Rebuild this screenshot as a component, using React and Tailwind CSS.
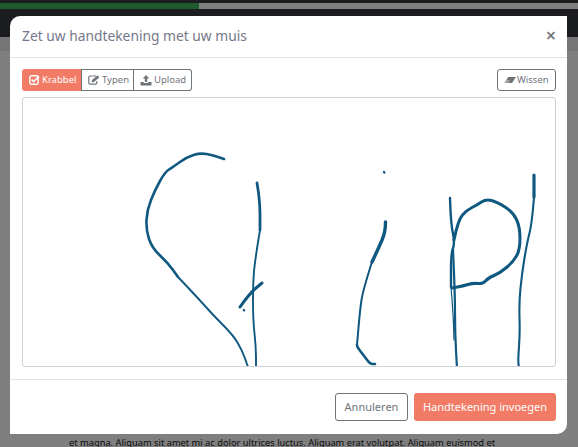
import React from "react";

// points read off the picture, page pixel coords
const strokes = [
  { w: 2.6, pts: [[224, 159], [213, 155], [200, 153], [187, 157], [173, 167], [165, 172], [155, 190], [147, 210], [146, 230], [152, 248], [168, 263], [178, 277]] },
  { w: 1.9, pts: [[178, 277], [197, 297], [213, 315], [233, 335], [242, 350], [248, 367]] },
  { w: 2.8, pts: [[257, 183], [260, 200], [260, 230]] },
  { w: 1.9, pts: [[260, 230], [255, 260], [253, 283], [253, 320], [256, 347], [256, 368]] },
  { w: 3, pts: [[240, 307], [250, 293], [262, 283]] },
  { w: 2.2, pts: [[243.8, 310], [244.2, 310.4]] },
  { w: 2.4, pts: [[384, 172], [384.3, 172.5]] },
  { w: 3.4, pts: [[385.5, 222], [385.5, 232], [379, 247], [372, 262]] },
  { w: 2, pts: [[372, 262], [363, 290], [360, 310], [357, 345]] },
  { w: 2.6, pts: [[357, 345], [357, 347], [365, 357], [370, 364], [375, 364]] },
  { w: 2.4, pts: [[450, 198], [450.7, 223], [455, 243], [451, 253], [451, 287]] },
  { w: 2.2, pts: [[453, 250], [455, 293], [455, 333], [457, 368]] },
  { w: 1.2, pts: [[451, 287], [453, 310], [454, 340]] },
  { w: 3, pts: [[454, 240], [458, 220], [467, 210], [477, 205], [486, 199], [497, 202], [513, 212], [520, 227], [520, 250], [513, 262], [500, 273], [488, 278], [483, 284], [473, 283], [463, 286], [452, 288]] },
  { w: 3.2, pts: [[534, 175], [534, 197]] },
  { w: 2.1, pts: [[534, 197], [532, 223], [527, 243], [522, 273], [519, 303], [520, 333], [518, 360], [519, 368]] },
];

const toPath = (pts) => {
  let d = `M${pts[0][0]} ${pts[0][1]}`;
  for (let i = 1; i < pts.length - 1; i++) {
    const mx = (pts[i][0] + pts[i + 1][0]) / 2;
    const my = (pts[i][1] + pts[i + 1][1]) / 2;
    d += ` Q${pts[i][0]} ${pts[i][1]} ${mx} ${my}`;
  }
  const last = pts[pts.length - 1];
  return d + ` L${last[0]} ${last[1]}`;
};

function Signature() {
  return (
    <svg viewBox="23 98 532 268" className="w-full h-full block" fill="none" stroke="#0f5880" strokeLinecap="round" strokeLinejoin="round">
      {strokes.map((s, i) => (
        <path key={i} d={toPath(s.pts)} strokeWidth={s.w} />
      ))}
    </svg>
  );
}

function CheckSquare() {
  return (
    <svg width="11" height="10" viewBox="0 0 11 10" fill="none">
      <rect x="0.8" y="0.8" width="8.4" height="8.4" rx="1.6" stroke="#fff" strokeWidth="1.4" />
      <path d="M2.6 4.6 L4.6 6.6 L10 1.4" stroke="#fff" strokeWidth="1.6" />
    </svg>
  );
}

function EditSquare() {
  return (
    <svg width="12" height="10" viewBox="0 0 12 10" fill="none">
      <path d="M8 1 H2 C1.2 1 0.8 1.4 0.8 2.2 V8 C0.8 8.8 1.2 9.2 2 9.2 H7.6 C8.4 9.2 8.8 8.8 8.8 8 V6" stroke="#6f7479" strokeWidth="1.2" />
      <path d="M4 5 L9.4 0.4 L11.4 2.2 L6 7 L3.8 7.2 Z" fill="#6f7479" />
    </svg>
  );
}

function UploadIcon() {
  return (
    <svg width="12" height="11" viewBox="0 0 12 11" fill="#6f7479">
      <path d="M6 0 L9.2 3.4 H7.2 V7 H4.8 V3.4 H2.8 Z" />
      <path d="M0.5 7 H3.8 V8 H8.2 V7 H11.5 V10.6 H0.5 Z" />
    </svg>
  );
}

function EraserIcon() {
  return (
    <svg width="12" height="8" viewBox="0 0 14 9" fill="#6f7479">
      <path d="M5 1 H14 L9.4 8 H0.5 Z" />
      <path d="M0.5 8 L3 4.5 H7 L5 8 Z" fill="#fff" opacity="0.35" />
    </svg>
  );
}

export default function App() {
  return (
    <div className="relative w-[578px] h-[447px] overflow-hidden bg-[#7f7f7f] font-['Noto_Sans',sans-serif]">
      {/* page behind the backdrop */}
      <div className="h-[37px] bg-[#1b1d20] pt-[3px]">
        <div className="flex h-[6px] bg-[#7f7f7f]">
          <div className="w-[199px] bg-[#1d5a2d]" />
        </div>
      </div>
      <div className="h-[14px] bg-[#757575]" />
      <p className="absolute left-[69px] top-[436px] whitespace-nowrap text-[9.3px] leading-[14px] text-[#0d0d0d]">
        et magna. Aliquam sit amet mi ac dolor ultrices luctus. Aliquam erat volutpat. Aliquam euismod et
      </p>

      {/* modal */}
      <div className="absolute left-[10px] top-[16px] w-[557px] h-[418px] flex flex-col bg-white rounded-tl-[10px] rounded-br-[10px]">
        <div className="h-[42px] shrink-0 flex items-center justify-between pl-[12px] pr-[11px] border-b border-[#dfe1e3]">
          <h2 className="text-[13.8px] font-normal text-[#75788a]">Zet uw handtekening met uw muis</h2>
          <span className="text-[18px] leading-none text-[#6f7479] font-semibold -mt-[3px]">×</span>
        </div>

        <div className="flex-1 pl-[12px] pr-[11px] pt-[11px]">
          <div className="flex justify-between h-[22px]">
            <div className="flex text-[9.5px] text-[#6f7479]">
              <button className="flex items-center gap-[2px] pl-[7px] w-[59px] bg-[#f27b66] text-white rounded-l-[3px]">
                <CheckSquare />
                Krabbel
              </button>
              <button className="flex items-center gap-[2px] pl-[6px] w-[53px] border border-[#6f7479]">
                <EditSquare />
                Typen
              </button>
              <button className="flex items-center gap-[2px] pl-[6px] w-[58px] border border-l-0 border-[#6f7479] rounded-r-[3px]">
                <UploadIcon />
                Upload
              </button>
            </div>
            <button className="flex items-center gap-[1px] pl-[6px] w-[59px] border border-[#6f7479] rounded-[3px] text-[9.5px] text-[#6f7479]">
              <EraserIcon />
              Wissen
            </button>
          </div>
          <div className="mt-[6px] h-[270px] border border-[#d0d3d6] rounded-[3px] overflow-hidden">
            <Signature />
          </div>
        </div>

        <div className="h-[55px] shrink-0 flex items-start justify-end gap-[6px] pt-[13px] pr-[11px] border-t border-[#dfe1e3]">
          <button className="h-[28px] w-[73px] border border-[#6f7479] rounded-[3px] text-[11px] text-[#6f7479]">Annuleren</button>
          <button className="h-[28px] w-[142px] bg-[#f27b66] rounded-[3px] text-[11px] text-white">Handtekening invoegen</button>
        </div>
      </div>
    </div>
  );
}
